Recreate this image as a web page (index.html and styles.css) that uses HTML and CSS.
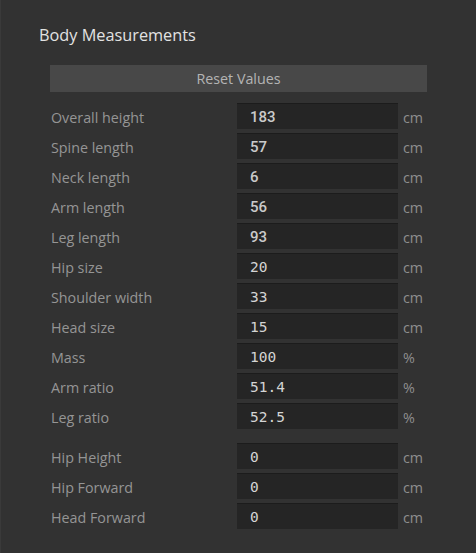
FILE: index.html
```html
<!DOCTYPE html>
<html>
<head>
<meta charset="utf-8">
<link rel="stylesheet" href="styles.css">
</head>
<body>
<div class="panel">
  <h2 class="title">Body Measurements</h2>
  <div class="content">
    <div class="reset">Reset Values</div>
    <div class="rows">
      <div class="label">Overall height</div><div class="field">183</div><div class="unit">cm</div>
      <div class="label">Spine length</div><div class="field">57</div><div class="unit">cm</div>
      <div class="label">Neck length</div><div class="field">6</div><div class="unit">cm</div>
      <div class="label">Arm length</div><div class="field">56</div><div class="unit">cm</div>
      <div class="label">Leg length</div><div class="field">93</div><div class="unit">cm</div>
      <div class="label">Hip size</div><div class="field mono">20</div><div class="unit">cm</div>
      <div class="label">Shoulder width</div><div class="field mono">33</div><div class="unit">cm</div>
      <div class="label">Head size</div><div class="field mono">15</div><div class="unit">cm</div>
      <div class="label">Mass</div><div class="field mono">100</div><div class="unit">%</div>
      <div class="label">Arm ratio</div><div class="field mono">51.4</div><div class="unit">%</div>
      <div class="label">Leg ratio</div><div class="field mono">52.5</div><div class="unit">%</div>
    </div>
    <div class="rows extra">
      <div class="label">Hip Height</div><div class="field mono">0</div><div class="unit">cm</div>
      <div class="label">Hip Forward</div><div class="field mono">0</div><div class="unit">cm</div>
      <div class="label">Head Forward</div><div class="field mono">0</div><div class="unit">cm</div>
    </div>
  </div>
</div>
</body>
</html>
```

FILE: styles.css
```css
html, body {
  margin: 0;
  padding: 0;
  background: #323232;
}
body {
  width: 476px;
  height: 553px;
  overflow: hidden;
  font-family: "Open Sans", "Noto Sans", sans-serif;
}
.panel {
  box-sizing: border-box;
  height: 553px;
  border-left: 1px solid #3a3a3a;
  padding: 0 0 0 38px;
}
.title {
  margin: 0;
  padding-top: 25px;
  font-size: 16.3px;
  font-weight: 400;
  line-height: 21px;
  color: #e2e2e2;
}
.content {
  padding: 19px 0 0 11px;
  width: 377px;
}
.reset {
  height: 27px;
  background: #484848;
  color: #b4b4b4;
  font-size: 14.3px;
  line-height: 28px;
  text-align: center;
}
.rows {
  display: grid;
  grid-template-columns: 187px 161px auto;
  grid-auto-rows: 26px;
  row-gap: 4px;
  margin-top: 11px;
  align-items: center;
}
.rows.extra {
  margin-top: 14px;
}
.label {
  margin-left: 1px;
  padding-top: 2px;
  font-size: 14.3px;
  color: #959595;
}
.field {
  box-sizing: border-box;
  height: 26px;
  background: #252525;
  border-top: 1px solid #1c1c1c;
  padding-left: 13px;
  font-family: Roboto, sans-serif;
  font-weight: 500;
  font-size: 15px;
  line-height: 27px;
  color: #cacaca;
}
.field.mono {
  font-family: "DejaVu Sans Mono", monospace;
  font-weight: 400;
  font-size: 14.5px;
  color: #d4d4d4;
}
.unit {
  padding-left: 5px;
  padding-top: 2px;
  font-size: 14.3px;
  color: #8e8e8e;
}
```
